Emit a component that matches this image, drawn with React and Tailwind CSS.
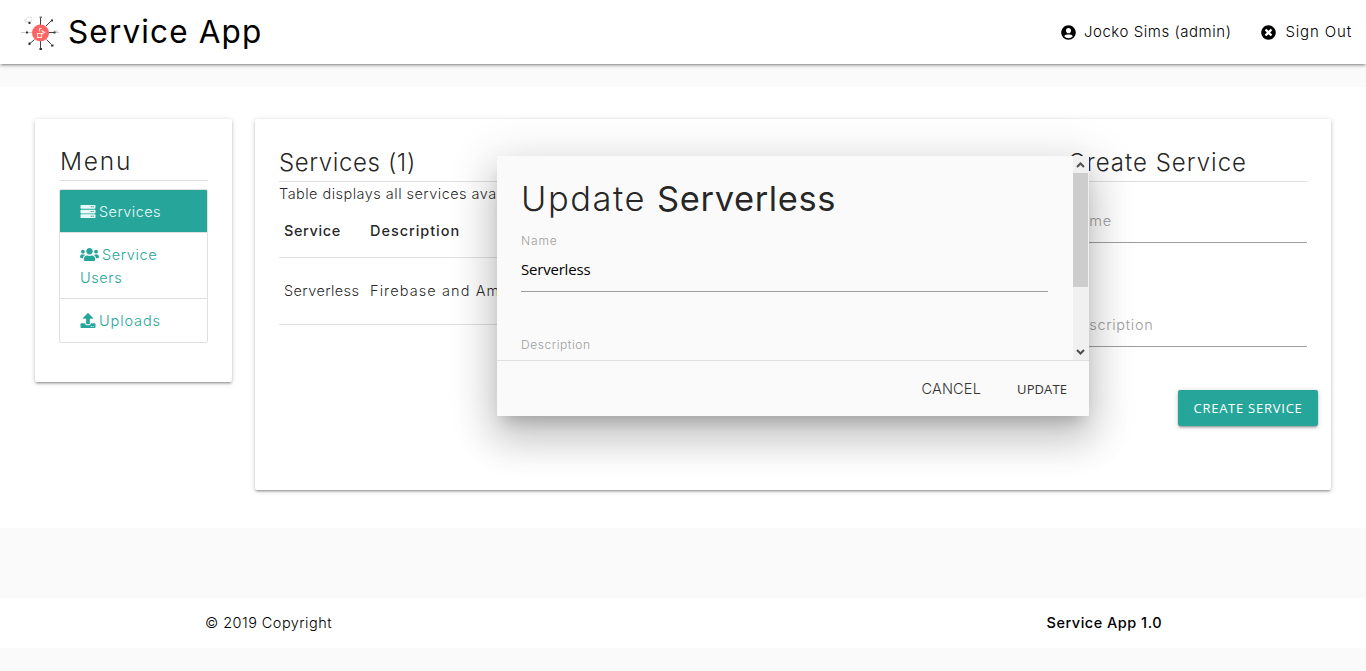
import React from "react";
import { FaServer, FaUsers, FaUpload, FaUserCircle, FaTimesCircle } from "react-icons/fa";

const cardShadow =
  "shadow-[0_2px_2px_0_rgba(0,0,0,0.14),0_3px_1px_-2px_rgba(0,0,0,0.12),0_1px_5px_0_rgba(0,0,0,0.2)]";

function Logo() {
  return (
    <svg className="mt-[4px] h-[38px] w-[40px] shrink-0" viewBox="0 0 40 38" fill="none">
      <g stroke="#444" strokeWidth="1">
        <path d="M19.500 2v8M19.500 26v8M30 6l-5 5M25.500 24.500l4.500 4.500M13.500 24.500l-4.500 4M27 17.500h6" />
        <path d="M33 17.500h5M0 17.500h11M6 7l5-1M33 16h4" stroke="#ccc" />
      </g>
      <g fill="#333">
        <rect x="18.500" y="33" width="2.500" height="2" />
        <rect x="30" y="4.500" width="2" height="2" />
        <rect x="30" y="29.500" width="2.500" height="2" />
        <rect x="7.500" y="27.500" width="2" height="2.500" />
        <rect x="5" y="16.500" width="2" height="2" />
        <rect x="32.500" y="16.500" width="2" height="2" />
        <rect x="7.500" y="7" width="2" height="2" />
        <rect x="18.500" y="1.500" width="2.500" height="1.500" fill="#777" />
      </g>
      <path d="M5 8l0-3 2-3 3 0 1 3M3 5h2" stroke="#d4d4d4" strokeDasharray="2 1" />
      <circle cx="19.500" cy="18" r="8.500" fill="#ff6464" />
      <path d="M16.500 18.500h4v4h-4zM18.500 13.500v3M18.500 13.500h2M20.500 15.500l3 2-3 1.500" stroke="#ffe4e4" strokeWidth="1.200" />
    </svg>
  );
}

function MenuItem({ icon: Icon, active, className, iconClass, children }) {
  return (
    <a
      className={
        "block border-b border-[#e0e0e0] px-5 pt-[10px] text-[14.5px] leading-[23px] last:border-b-0 " +
        (active ? "bg-[#26a69a] text-[#eafaf9] " : "text-[#26a69a] ") +
        className
      }
    >
      <Icon className={"mr-[3px] inline-block align-[-2px] " + iconClass} />
      {children}
    </a>
  );
}

function Field({ label, className }) {
  return (
    <div className={"h-[45px] border-b border-[#9e9e9e] text-[14.5px] text-[#9e9e9e] " + className}>
      <span className="block h-[44px] leading-[46px] tracking-[0.7px]">{label}</span>
    </div>
  );
}

function Modal() {
  return (
    <div className="absolute top-[156px] left-[497px] flex h-[260px] w-[592px] flex-col rounded-[1px] bg-[#fafafa] shadow-[0_24px_38px_3px_rgba(0,0,0,0.14),0_9px_46px_8px_rgba(0,0,0,0.12),0_11px_15px_-7px_rgba(0,0,0,0.2)]">
      <div className="flex h-[204px] overflow-hidden">
        <div className="flex-1 pt-6 pr-[25px] pl-6">
          <h4 className="h-[38px] text-[34.500px] leading-[38px] font-light tracking-[1.5px] whitespace-nowrap">
            Update <span className="font-normal tracking-[0.6px]">Serverless</span>
          </h4>
          <div className="mt-[14px] text-[12px] leading-[18px] tracking-[0.9px] text-[#9e9e9e]">Name</div>
          <div className="mt-[-1px] h-[43px] border-b border-[#9e9e9e] font-['Open_Sans',sans-serif] text-[15px] leading-[40px] font-normal tracking-[-0.2px] text-black">
            Serverless
          </div>
          <div className="mt-[44px] text-[12px] leading-[18px] tracking-[0.55px] text-[#9e9e9e]">Description</div>
        </div>
        <div className="flex w-4 flex-col items-start bg-[#f0f0f0]">
          <svg className="h-[17px] w-[15px]" viewBox="0 0 15 17" fill="none" stroke="#505050" strokeWidth="2">
            <path d="M4 11l3.500-3.500 3.500 3.500" />
          </svg>
          <div className="h-[114px] w-[15px] bg-[#cdcdcd]" />
          <svg className="mt-auto h-[17px] w-[15px]" viewBox="0 0 15 17" fill="none" stroke="#505050" strokeWidth="2">
            <path d="M4 7l3.500 3.500 3.500-3.500" />
          </svg>
        </div>
      </div>
      <div className="flex h-[56px] justify-end border-t border-[#e0e0e0] pt-[10px] pr-[22px] text-[#343434]">
        <span className="mr-9 text-[14.5px] leading-[36px] tracking-[0.2px]">CANCEL</span>
        <span className="font-['Open_Sans',sans-serif] text-[13px] leading-[36px] font-normal tracking-[0.1px]">UPDATE</span>
      </div>
    </div>
  );
}

export default function App() {
  return (
    <div className="relative h-[671px] w-[1366px] overflow-hidden bg-[#fafafa] font-[Inter,sans-serif] font-light text-[rgba(0,0,0,0.87)]">
      <header className={"relative flex h-16 items-center bg-white pl-[21px] text-black " + cardShadow}>
        <Logo />
        <span className="ml-[7px] text-[31.500px] leading-[64px] font-normal tracking-[1.15px]">Service App</span>
        <nav className="ml-auto flex items-center pt-px pr-[14px] text-[15px]">
          <FaUserCircle className="mr-2 h-[15px] w-[15px]" />
          <span className="tracking-[0.55px]">Jocko Sims (admin)</span>
          <FaTimesCircle className="mr-[9px] ml-[30px] h-[15px] w-[15px]" />
          <span className="tracking-[0.85px]">Sign Out</span>
        </nav>
      </header>

      <main className="mt-[23px] flex h-[441px] items-start gap-[23px] rounded-[2px] bg-white px-[35px] pt-8">
        <aside className={"h-[263px] w-[197px] rounded-[2px] bg-white px-6 pt-6 " + cardShadow}>
          <h5 className="h-[38px] border-b border-[#e0e0e0] text-[24.500px] leading-[37px] tracking-[1.8px] indent-px">Menu</h5>
          <div className="mt-2 overflow-hidden rounded-[2px] border border-[#e0e0e0]">
            <MenuItem icon={FaServer} className="h-[43px] tracking-[0.45px]" iconClass="h-[15px] w-[16px]" active>Services</MenuItem>
            <MenuItem icon={FaUsers} className="h-[66px] tracking-[0.6px]" iconClass="h-[15px] w-[19px]">Service Users</MenuItem>
            <MenuItem icon={FaUpload} className="h-[43px] tracking-[0.9px]" iconClass="h-[15px] w-[16px]">Uploads</MenuItem>
          </div>
        </aside>

        <section className={"flex h-[371px] w-[1076px] rounded-[2px] bg-white px-6 pt-6 " + cardShadow}>
          <div className="w-[766px]">
            <h5 className="h-[39px] border-b border-[#e0e0e0] text-[24px] leading-[39px] tracking-[0.6px]">Services (1)</h5>
            <p className="h-[22px] text-[14.5px] leading-[24px] tracking-[0.47px]">
              Table displays all services available
            </p>
            <div className="flex h-[54px] border-b border-[#e0e0e0] pl-[5px] text-[14.5px] leading-[53px] font-medium">
              <span className="w-[86px] tracking-[0.6px]">Service</span>
              <span className="tracking-[0.95px]">Description</span>
            </div>
            <div className="flex h-[67px] border-b border-[#e0e0e0] pl-[5px] text-[14.5px] leading-[66px]">
              <span className="w-[86px] tracking-[0.4px]">Serverless</span>
              <span className="tracking-[1.1px]">Firebase and Amazon</span>
            </div>
          </div>
          <div className="ml-6 w-[238px]">
            <h5 className="-ml-px h-[39px] border-b border-[#e0e0e0] text-[24px] leading-[39px] tracking-[1px]">Create Service</h5>
            <Field label="Name" className="mt-[16px]" />
            <Field label="Description" className="mt-[59px]" />
            <button
              className={
                "mt-[43px] ml-[109px] block h-9 w-[140px] rounded-[2px] bg-[#26a69a] text-center font-['Open_Sans',sans-serif] text-[13px] leading-9 font-normal tracking-[0.75px] whitespace-nowrap text-white " +
                cardShadow
              }
            >
              CREATE SERVICE
            </button>
          </div>
        </section>
      </main>

      <footer className="mt-[70px] flex h-[50px] justify-between bg-white pr-[204px] pl-[205px] text-[14.5px] leading-[50px] text-black">
        <span className="tracking-[0.45px]">© 2019 Copyright</span>
        <span className="font-medium tracking-[0.5px]">Service App 1.0</span>
      </footer>

      <Modal />
    </div>
  );
}
